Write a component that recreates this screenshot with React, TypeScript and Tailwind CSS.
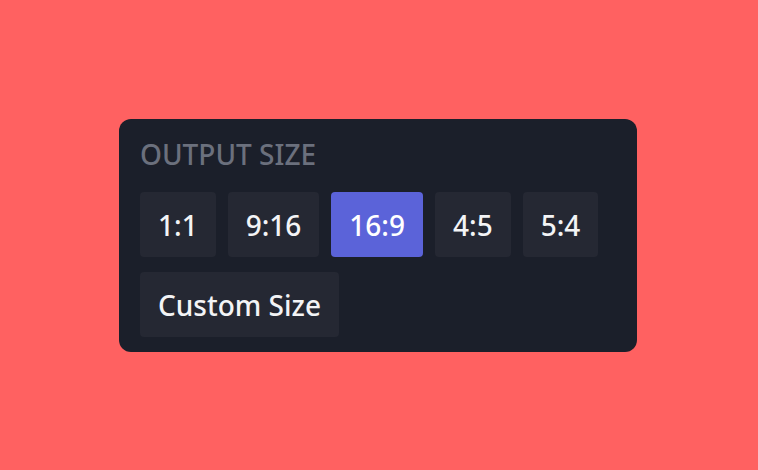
import React from "react";

export default function App() {
  const sizes = ["1:1", "9:16", "16:9", "4:5", "5:4"];
  return (
    <div
      className="w-[758px] h-[470px] bg-[#ff6161] flex items-start"
      style={{ fontFamily: '"Noto Sans", sans-serif' }}
    >
      <div className="ml-[119px] mt-[119px] w-[518px] h-[233px] rounded-[12px] bg-[#1b1f2a] pl-[21px] pt-[21px]">
        <div className="text-[28px] leading-none font-medium text-[#6b707d]">OUTPUT SIZE</div>
        <div className="mt-[24px] flex gap-[12px]">
          {sizes.map((s) => (
            <div
              key={s}
              className={
                s === "16:9"
                  ? "h-[65px] px-[18px] flex items-center rounded-[4px] bg-[#5b63d9] text-white text-[28px] leading-none font-medium"
                  : "h-[65px] px-[18px] flex items-center rounded-[4px] bg-[#252833] text-[#f3f4f6] text-[28px] leading-none font-medium"
              }
            >
              {s}
            </div>
          ))}
        </div>
        <div className="mt-[15px] flex">
          <div className="h-[65px] px-[18px] flex items-center rounded-[4px] bg-[#252833] text-[#f3f4f6] text-[28px] leading-none font-medium">
            Custom Size
          </div>
        </div>
      </div>
    </div>
  );
}
